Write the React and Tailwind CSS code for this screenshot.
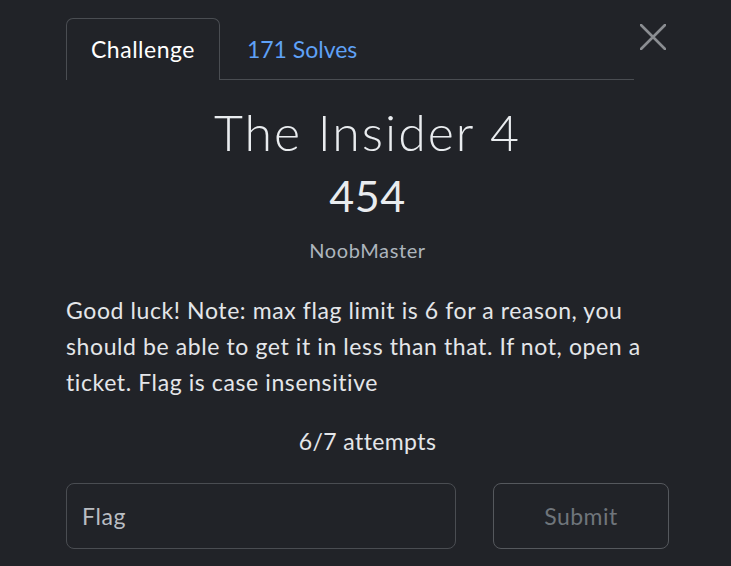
export default function App() {
  return (
    <div
      className="min-h-[566px] w-full bg-[#212328] pl-[66px] pr-[62px] pt-[18px] text-[#e4e6e9]"
      style={{ fontFamily: "Lato, 'Open Sans', sans-serif" }}
    >
      {/* tabs + close */}
      <div className="flex items-start">
        <ul className="flex flex-1 items-end border-b border-[#4a4d52]">
          <li className="-mb-px flex h-[62px] items-center rounded-t-[7px] border border-b-0 border-[#4a4d52] bg-[#212328] px-[24px] text-[23px] leading-none tracking-[0.5px] text-white">
            Challenge
          </li>
          <li className="-mb-px flex h-[62px] items-center border border-transparent px-[26px] text-[23px] leading-none text-[#5fa1f6]">
            171 Solves
          </li>
        </ul>
        <div className="w-[35px] pt-[6px]">
          <svg className="ml-[6px]" width="26" height="26" viewBox="0 0 26 26">
            <path d="M1 1 L25 25 M25 1 L1 25" stroke="#8a8d91" strokeWidth="2.6" strokeLinecap="round" />
          </svg>
        </div>
      </div>

      {/* title block */}
      <h2 className="mt-[27px] text-center text-[50px] font-light leading-[50px] tracking-[2px] text-[#e9ecef]">
        The Insider 4
      </h2>
      <h3 className="mt-[17px] text-center text-[43px] font-normal leading-[43px] tracking-[0.5px] text-[#e9ecef]">454</h3>
      <p className="mt-[23px] text-center text-[20px] leading-[20px] tracking-[0.6px] text-[#adb5bd]">NoobMaster</p>

      <p className="-mr-[20px] mt-[32px] whitespace-nowrap text-[23px] leading-[36px] tracking-[0.6px] text-[#e4e6e9]">
        Good luck! Note: max flag limit is 6 for a reason, you
        <br />
        should be able to get it in less than that. If not, open a
        <br />
        ticket. Flag is case insensitive
      </p>

      <p className="mt-[30px] text-center text-[23px] leading-[23px] tracking-[0.4px] text-[#e4e6e9]">6/7 attempts</p>

      <div className="mt-[30px] grid grid-cols-[390px_1fr] gap-[37px]">
        <input
          placeholder="Flag"
          className="h-[66px] rounded-[8px] border border-[#4a4d52] bg-transparent px-[15px] text-[23px] tracking-[0.6px] text-white outline-none placeholder:text-[#b9bdc2]"
        />
        <button className="h-[66px] rounded-[8px] border border-[#55585d] bg-transparent text-[23px] tracking-[0.5px] text-[#6f757b]">
          Submit
        </button>
      </div>
    </div>
  );
}
